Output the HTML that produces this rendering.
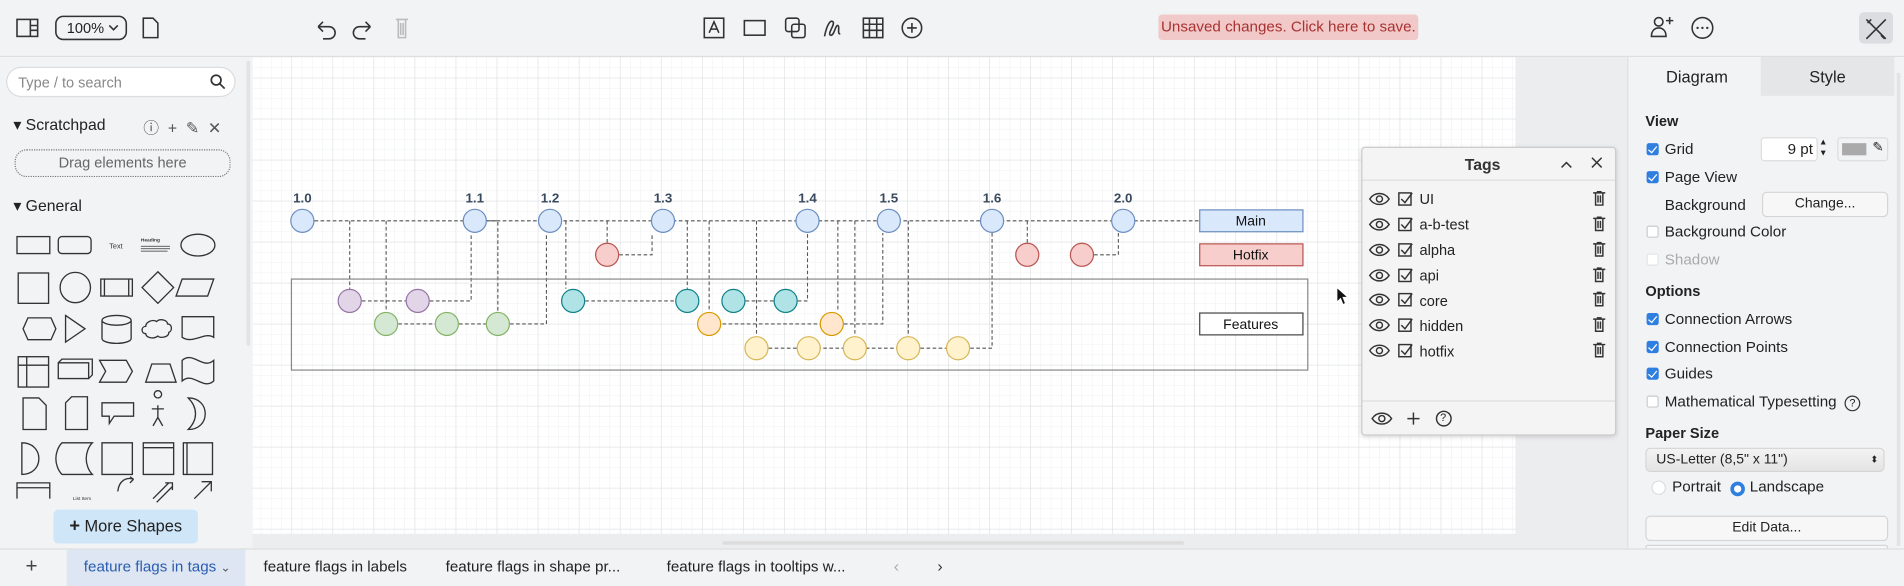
<!DOCTYPE html>
<html><head><meta charset="utf-8">
<style>
html,body{margin:0;padding:0;width:1904px;height:586px;overflow:hidden;background:#f1f3f5;}
#w{position:absolute;left:0;top:0;width:1568px;height:483px;overflow:hidden;transform:scale(1.21429,1.2133);transform-origin:0 0;font-family:"Liberation Sans",sans-serif;color:#222;font-size:12.5px;}
.a{position:absolute;}
.cb{position:absolute;width:10px;height:10px;border-radius:2px;background:#2f7fe0;}
.cb:after{content:"";position:absolute;left:3px;top:0.5px;width:3px;height:6px;border:solid #fff;border-width:0 1.6px 1.6px 0;transform:rotate(40deg);}
.cu{position:absolute;width:10px;height:10px;border-radius:2px;background:#fff;border:1px solid #ccc;box-sizing:border-box;}
.btn{position:absolute;background:#f7f7f8;border:1px solid #d5d5d5;border-radius:4px;text-align:center;box-sizing:border-box;font-size:11.5px;}
.b{font-weight:bold;}
</style></head><body><div id="w">
<!-- toolbar -->
<div class="a" style="left:0;top:0;width:1568px;height:46px;background:#f1f3f5;border-bottom:1px solid #dcdee0;"></div>
<svg class="a" style="left:0;top:0" width="1568" height="46" fill="none" stroke="#333" stroke-width="1.3">
<rect x="14" y="16" width="17" height="14"/><line x1="25" y1="16" x2="25" y2="30"/><line x1="25" y1="21" x2="31" y2="21"/><line x1="25" y1="25" x2="31" y2="25"/>
<rect x="46" y="13.5" width="58" height="19" rx="6"/>
<path d="M90 21l3.5 3.5 3.5-3.5"/>
<path d="M118 15h8l4 4v12h-12z"/>
<path d="M262 22h9a5 5 0 0 1 0 10h-5M262 22l4-4M262 22l4 4"/>
<path d="M305 22h-9a5 5 0 0 0 0 10h5M305 22l-4-4M305 22l-4 4"/>
<path stroke="#bbb" d="M326 16h10M328 16v15h6v-15M330 19v10M332 19v10"/>
<rect x="580" y="15" width="16" height="16"/><path d="M584 27l4-9 4 9M585.5 24h5"/>
<rect x="613" y="17" width="17" height="12"/>
<rect x="647" y="15" width="11" height="11" rx="2"/><rect x="652" y="20" width="11" height="11" rx="2"/>
<path d="M679 30c2-10 5-14 7-12s-5 10-2 11 4-9 6-8-1 7 2 7"/>
<rect x="711" y="15" width="16" height="16"/><path d="M711 20h16M711 25h16M716 15v16M722 15v16"/>
<circle cx="751" cy="23" r="8"/><path d="M751 19v8M747 23h8"/>
<circle cx="1366" cy="18" r="3.5"/><path d="M1360 30c0-5 3-7 6-7s6 2 6 7zM1375 14v6M1372 17h6"/>
<circle cx="1402" cy="23" r="8.5"/>
<g fill="#333" stroke="none"><circle cx="1398" cy="23" r="1"/><circle cx="1402" cy="23" r="1"/><circle cx="1406" cy="23" r="1"/></g>
<rect x="1531" y="10" width="28" height="26" rx="4" fill="#dcdde0" stroke="none"/>
<path d="M1537 16l16 16M1553 16l-16 16M1538 19l3-3M1549 29l3 3"/>
</svg>
<div class="a" style="left:55px;top:16px;font-size:12px;">100%</div>
<div class="a" style="left:954px;top:12px;width:214px;height:21px;background:#f2c9c9;border-radius:3px;color:#a83232;font-size:12.5px;line-height:21px;text-align:center;">Unsaved changes. Click here to save.</div>
<!-- sidebar -->
<div class="a" style="left:0;top:47px;width:207px;height:406px;background:#f1f3f5;"></div>
<div class="a" style="left:203px;top:50px;width:3px;height:235px;background:#e1e3e5;border-radius:2px"></div>
<div class="a" style="left:5px;top:55px;width:189px;height:25px;background:#fff;border:1px solid #ddd;border-radius:13px;box-sizing:border-box;"></div>
<div class="a" style="left:15px;top:61px;color:#888;font-size:12px;">Type / to search</div>
<svg class="a" style="left:172px;top:60px" width="14" height="14" fill="none" stroke="#333" stroke-width="1.4"><circle cx="6" cy="6" r="4"/><path d="M9 9l4 4"/></svg>
<div class="a" style="left:11px;top:95px;font-size:13px;">▾ Scratchpad</div>
<div class="a" style="left:118px;top:95px;font-size:13px;color:#555;">ⓘ&nbsp;&nbsp;+&nbsp;&nbsp;✎&nbsp;&nbsp;✕</div>
<div class="a" style="left:12px;top:123px;width:178px;height:23px;border:1.5px dotted #777;border-radius:10px;box-sizing:border-box;text-align:center;line-height:20px;color:#666;font-size:12px;">Drag elements here</div>
<div class="a" style="left:11px;top:162px;font-size:13px;">▾ General</div>
<svg class="a" style="left:0;top:185px" width="200" height="230" fill="none" stroke="#333" stroke-width="1.1">
<rect x="14" y="10" width="27" height="14"/><rect x="48" y="10" width="27" height="14" rx="3"/>
<text x="90" y="20" font-size="6" fill="#333" stroke="none" font-family="Liberation Sans">Text</text>
<text x="116" y="14" font-size="4" fill="#333" stroke="none" font-weight="bold" font-family="Liberation Sans">Heading</text>
<path stroke-width="0.6" d="M116 18h24M116 20h24M116 22h22"/>
<ellipse cx="163" cy="17" rx="14" ry="9"/>
<rect x="15" y="40" width="25" height="25"/><circle cx="62" cy="52" r="12.5"/><rect x="83" y="45" width="26" height="14"/><path d="M86 45v14M106 45v14M130 39l13 13-13 13-13-13zM150 45h26l-5 14h-26z"/>
<path d="M19 86l4-9h19l4 9-4 9h-19zM54 75l16 11-16 11zM84 79a12 4 0 0 1 24 0v15a12 4 0 0 1-24 0zM84 79a12 4 0 0 0 24 0M120 84c0-4 6-6 9-4 3-3 9-1 9 2 4 0 4 6 1 7 0 4-7 5-9 3-4 3-10 1-10-2-4 0-4-6 0-6zM150 76h26v17c-7-5-17 6-26 0z"/>
<rect x="15" y="109" width="25" height="25"/><path d="M15 116h25M22 109v25M48 114h25v13h-25zM48 114l3-3h25v13l-3 3M82 112h22l5 9-5 9h-22l5-9zM120 130l5-15h15l5 15zM150 112c9-8 17 8 26 0v17c-9 8-17-8-26 0z"/>
<path d="M19 143h13l6 6v20h-19zM54 147l5-5h13v27h-18zM84 147h26v11h-16l-4 6v-6h-6zM130 143a3 3 0 1 1 0.1 0M130 149v10M125 152h10M130 159l-4 7M130 159l4 7M155 143c9 0 14 6 14 13s-5 13-14 13c4-4 6-8 6-13s-2-9-6-13z"/>
<path d="M18 180c9 0 14 6 14 13s-5 13-14 13zM51 180h25c-3 3-5 8-5 13s2 10 5 13h-25c-3-3-5-8-5-13s2-10 5-13zM84 180h25v26h-25zM118 180h25v26h-25zM118 184h25M151 180h24v26h-24zM154 180v26"/>
<path d="M14 226v-13h27v13M14 217h27M110 210c-6-2-12 1-13 10M110 210l-3-2M110 210l-3 3M126 226l13-13M129 229l13-13M136 213h6v6M160 226l14-14M166 212h8v8"/>
<text x="60" y="227" font-size="4" fill="#333" stroke="none" font-family="Liberation Sans">List Item</text>
</svg>
<div class="a" style="left:44px;top:420px;width:119px;height:28px;background:#cfe5f8;border-radius:4px;text-align:center;line-height:28px;font-size:13.5px;"><b style="font-size:15px">+</b> More Shapes</div>
<!-- canvas -->
<div class="a" style="left:208px;top:47px;width:1132px;height:406px;background:#ecedef;"></div>
<svg class="a" style="left:208px;top:47px" width="1040" height="393">
<defs>
<pattern id="mn" width="8.45" height="8.45" patternUnits="userSpaceOnUse" x="-1.3" y="0.6"><path d="M8.45 0V8.45H0" fill="none" stroke="#eceef0" stroke-width="0.7"/></pattern>
<pattern id="mj" width="33.8" height="33.8" patternUnits="userSpaceOnUse" x="-1.3" y="-16.3"><path d="M33.8 0V33.8H0" fill="none" stroke="#d9dbdd" stroke-width="0.8"/></pattern>
</defs>
<rect width="1040" height="393" fill="#fff"/><rect width="1040" height="393" fill="url(#mn)"/><rect width="1040" height="393" fill="url(#mj)"/>
</svg>
<div class="a" style="left:595px;top:446px;width:380px;height:3px;background:#ddd;border-radius:2px"></div>
<svg class="a" style="left:0;top:0" width="1248" height="440" font-family="Liberation Sans">
<g fill="none" stroke="#555" stroke-width="0.9" stroke-dasharray="3 2">
<path d="M249 182H988"/>
<path d="M288 182V238M318 182V257M354 248H388V192M396 182H410V257M420 267H450V192M466 182V238M500 182V200M510 210H537V192M566 182V238M584 182V257M604 248H647M657 248H665V192M595 267H727V192M690 182V257M623 182V277M704 182V277M748 182V277M799 287H817V192M846 182V200M901 210H921V192M298 248H334M328 267H400M482 248H556M633 287H779"/>
</g>
<g stroke-width="1">
<g fill="#dae8fc" stroke="#6c8ebf"><ellipse cx="249" cy="182" rx="9.5" ry="9.5"/><ellipse cx="391" cy="182" rx="9.5" ry="9.5"/><ellipse cx="453" cy="182" rx="9.5" ry="9.5"/><ellipse cx="546" cy="182" rx="9.5" ry="9.5"/><ellipse cx="665" cy="182" rx="9.5" ry="9.5"/><ellipse cx="732" cy="182" rx="9.5" ry="9.5"/><ellipse cx="817" cy="182" rx="9.5" ry="9.5"/><ellipse cx="925" cy="182" rx="9.5" ry="9.5"/></g>
<g fill="#f8cecc" stroke="#b85450"><ellipse cx="500" cy="210" rx="9.5" ry="9.5"/><ellipse cx="846" cy="210" rx="9.5" ry="9.5"/><ellipse cx="891" cy="210" rx="9.5" ry="9.5"/></g>
<g fill="#e1d5e7" stroke="#9673a6"><ellipse cx="288" cy="248" rx="9.5" ry="9.5"/><ellipse cx="344" cy="248" rx="9.5" ry="9.5"/></g>
<g fill="#d5e8d4" stroke="#82b366"><ellipse cx="318" cy="267" rx="9.5" ry="9.5"/><ellipse cx="368" cy="267" rx="9.5" ry="9.5"/><ellipse cx="410" cy="267" rx="9.5" ry="9.5"/></g>
<g fill="#b0e3e6" stroke="#0e8088"><ellipse cx="472" cy="248" rx="9.5" ry="9.5"/><ellipse cx="566" cy="248" rx="9.5" ry="9.5"/><ellipse cx="604" cy="248" rx="9.5" ry="9.5"/><ellipse cx="647" cy="248" rx="9.5" ry="9.5"/></g>
<g fill="#ffe6cc" stroke="#d79b00"><ellipse cx="584" cy="267" rx="9.5" ry="9.5"/><ellipse cx="685" cy="267" rx="9.5" ry="9.5"/></g>
<g fill="#fff2cc" stroke="#d6b656"><ellipse cx="623" cy="287" rx="9.5" ry="9.5"/><ellipse cx="666" cy="287" rx="9.5" ry="9.5"/><ellipse cx="704" cy="287" rx="9.5" ry="9.5"/><ellipse cx="748" cy="287" rx="9.5" ry="9.5"/><ellipse cx="789" cy="287" rx="9.5" ry="9.5"/></g>
<rect x="240" y="230" width="837" height="75" fill="none" stroke="#888"/>
<rect x="988" y="173" width="85" height="18" fill="#dae8fc" stroke="#6c8ebf"/>
<rect x="988" y="201" width="85" height="18" fill="#f8cecc" stroke="#b85450"/>
<rect x="988" y="258" width="85" height="18" fill="#fff" stroke="#444"/>
</g>
<g font-size="11" font-weight="bold" fill="#3a4a5e" text-anchor="middle">
<text x="249" y="167">1.0</text><text x="391" y="167">1.1</text><text x="453" y="167">1.2</text><text x="546" y="167">1.3</text><text x="665" y="167">1.4</text><text x="732" y="167">1.5</text><text x="817" y="167">1.6</text><text x="925" y="167">2.0</text>
</g>
<g font-size="11.5" fill="#111" text-anchor="middle"><text x="1030" y="186">Main</text><text x="1030" y="214">Hotfix</text><text x="1030" y="271">Features</text></g>
</svg>
<svg class="a" style="left:1100px;top:236px" width="10" height="16"><path d="M1 1v12l3-3 2 5 2-1-2-5h4z" fill="#111" stroke="#fff" stroke-width="0.7"/></svg>
<!-- tags panel -->
<div class="a" style="left:1121px;top:121px;width:210px;height:238px;background:#f4f4f5;border:1px solid #ccc;box-sizing:border-box;box-shadow:0 1px 4px rgba(0,0,0,.15);border-radius:3px"></div>
<div class="a" style="left:1122px;top:148px;width:208px;height:1px;background:#ddd"></div>
<div class="a" style="left:1122px;top:330px;width:208px;height:1px;background:#ddd"></div>
<div class="a b" style="left:1121px;width:200px;top:128px;text-align:center;font-size:13px;color:#333">Tags</div>
<svg class="a" style="left:1120px;top:120px" width="212" height="240" fill="none" stroke="#333" stroke-width="1.2">
<path d="M166 18l4-4 4 4M191 10l8 8M199 10l-8 8"/>
<g id="row">
<path d="M8 44c4-6 12-6 16 0-4 6-12 6-16 0z"/><circle cx="16" cy="44" r="2.5"/>
<rect x="32" y="39" width="10" height="10"/><path d="M34 44l3 3 6-8"/>
<path d="M192 39h10M194 39v10h6v-10M196 41v6M198 41v6M195 38h4"/>
</g>
<use href="#row" y="21"/><use href="#row" y="42"/><use href="#row" y="63"/><use href="#row" y="83"/><use href="#row" y="104"/><use href="#row" y="125"/>
<path d="M10 225c4-6 12-6 16 0-4 6-12 6-16 0z"/><circle cx="18" cy="225" r="2.5"/>
<path d="M44 220v10M39 225h10"/><circle cx="69" cy="225" r="6"/>
</svg>
<div class="a" style="left:1169px;top:154px;line-height:21px;font-size:12px;">UI<br>a-b-test<br>alpha<br>api<br>core<br>hidden<br>hotfix</div>
<div class="a" style="left:1186px;top:339px;font-size:9px">?</div>
<!-- right panel -->
<div class="a" style="left:1340px;top:47px;width:228px;height:406px;background:#f1f3f5;border-left:1px solid #dcdee0"></div>
<div class="a" style="left:1450px;top:47px;width:110px;height:32px;background:#e5e6e8"></div>
<div class="a" style="left:1562px;top:60px;width:3px;height:390px;background:#e1e3e5"></div>
<div class="a" style="left:1372px;top:56px;font-size:13.5px">Diagram</div>
<div class="a" style="left:1490px;top:56px;font-size:13.5px">Style</div>
<div class="a b" style="left:1355px;top:93px;font-size:12px">View</div>
<div class="cb" style="left:1356px;top:118px"></div><div class="a" style="left:1371px;top:116px">Grid</div>
<div class="a" style="left:1450px;top:113px;width:47px;height:20px;background:#fff;border:1px solid #ddd;border-radius:3px;box-sizing:border-box;text-align:right;padding-right:3px;line-height:18px">9 pt</div>
<div class="a" style="left:1498px;top:113px;font-size:7px;line-height:9px">▲<br>▼</div>
<div class="a" style="left:1513px;top:113px;width:42px;height:20px;border:1px solid #ddd;border-radius:3px;box-sizing:border-box"><div style="position:absolute;left:3px;top:4px;width:20px;height:10px;background:#aaa"></div><span style="position:absolute;left:28px;top:1px;font-size:11px">✎</span></div>
<div class="cb" style="left:1356px;top:141px"></div><div class="a" style="left:1371px;top:139px">Page View</div>
<div class="a" style="left:1371px;top:162px">Background</div>
<div class="btn" style="left:1451px;top:158px;width:104px;height:21px;line-height:19px">Change...</div>
<div class="cu" style="left:1356px;top:186px"></div><div class="a" style="left:1371px;top:184px">Background Color</div>
<div class="cu" style="left:1356px;top:209px;border-color:#e5e5e5"></div><div class="a" style="left:1371px;top:207px;color:#aaa">Shadow</div>
<div class="a b" style="left:1355px;top:233px;font-size:12px">Options</div>
<div class="cb" style="left:1356px;top:258px"></div><div class="a" style="left:1371px;top:256px">Connection Arrows</div>
<div class="cb" style="left:1356px;top:281px"></div><div class="a" style="left:1371px;top:279px">Connection Points</div>
<div class="cb" style="left:1356px;top:303px"></div><div class="a" style="left:1371px;top:301px">Guides</div>
<div class="cu" style="left:1356px;top:326px"></div><div class="a" style="left:1371px;top:324px">Mathematical Typesetting <span style="display:inline-block;width:11px;height:11px;border:1.2px solid #333;border-radius:50%;font-size:9px;text-align:center;line-height:11px;margin-left:3px">?</span></div>
<div class="a b" style="left:1355px;top:350px;font-size:12px">Paper Size</div>
<div class="a" style="left:1355px;top:369px;width:197px;height:20px;background:linear-gradient(#f3f3f3,#e4e4e4);border:1px solid #d5d5d5;border-radius:4px;box-sizing:border-box;font-size:11.5px;line-height:18px;padding-left:8px">US-Letter (8,5" x 11")<span style="position:absolute;right:4px;top:0;font-size:8px">⬍</span></div>
<div class="a" style="left:1360px;top:396px;width:10px;height:10px;border-radius:50%;background:#fff;border:1px solid #ddd"></div><div class="a" style="left:1377px;top:394px">Portrait</div>
<div class="a" style="left:1425px;top:397px;width:6px;height:6px;border-radius:50%;border:3px solid #2f7fe0;background:#fff"></div><div class="a" style="left:1441px;top:394px">Landscape</div>
<div class="btn" style="left:1355px;top:425px;width:200px;height:21px;line-height:19px">Edit Data...</div>
<div class="btn" style="left:1355px;top:449px;width:200px;height:4px"></div>
<!-- bottom bar -->
<div class="a" style="left:0;top:452px;width:1568px;height:31px;background:#f1f3f5;border-top:1px solid #dcdee0"></div>
<div class="a" style="left:21px;top:457px;font-size:17px;color:#444">+</div>
<div class="a" style="left:55px;top:453px;width:147px;height:30px;background:#dde6f2"></div>
<div class="a" style="left:69px;top:460px;color:#2a5db0;font-size:12.5px">feature flags in tags <span style="font-size:10px;color:#555">⌄</span></div>
<div class="a" style="left:217px;top:460px;font-size:12.5px">feature flags in labels</div>
<div class="a" style="left:367px;top:460px;font-size:12.5px">feature flags in shape pr...</div>
<div class="a" style="left:549px;top:460px;font-size:12.5px">feature flags in tooltips w...</div>
<div class="a" style="left:736px;top:459px;font-size:13px;color:#aaa">‹</div>
<div class="a" style="left:772px;top:459px;font-size:13px;color:#333">›</div>
</div></body></html>
